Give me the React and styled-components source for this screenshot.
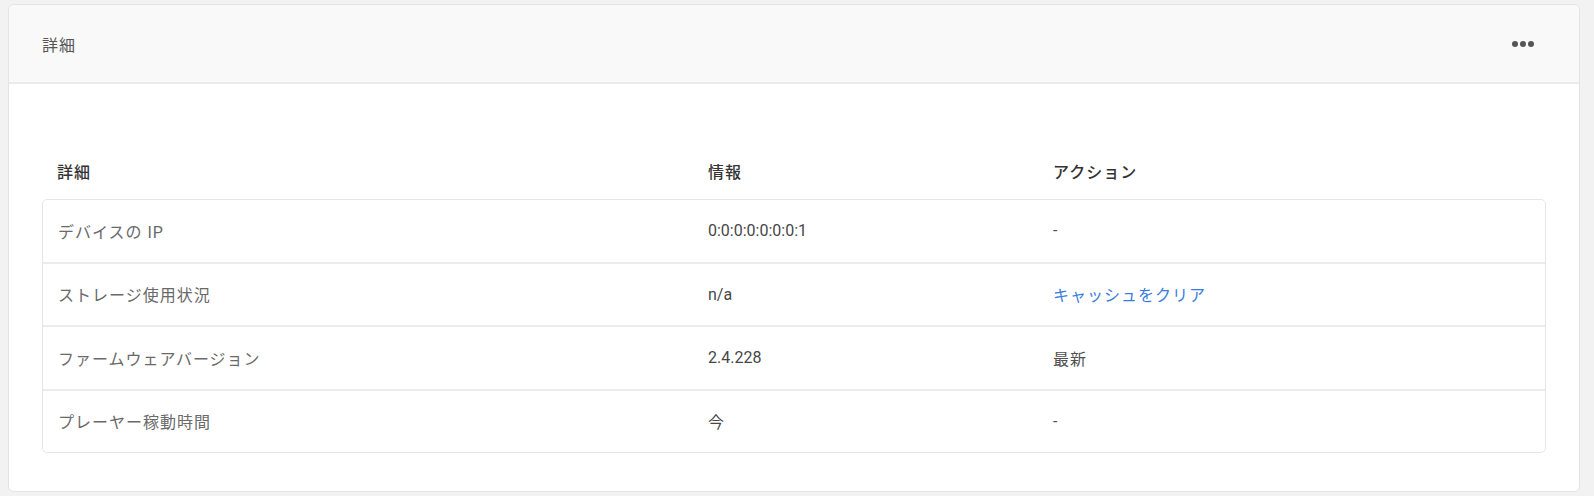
import React from "react";
import styled, { createGlobalStyle } from "styled-components";

const rows = [
  { label: "デバイスの IP", info: "0:0:0:0:0:0:0:1", action: "-" },
  { label: "ストレージ使用状況", info: "n/a", action: "キャッシュをクリア", link: true },
  { label: "ファームウェアバージョン", info: "2.4.228", action: "最新" },
  { label: "プレーヤー稼動時間", info: "今", action: "-" },
];

const App = () => {
  return (
    <>
      <GlobalStyle />
      <Page>
        <Card>
          <Header>
            <Title>詳細</Title>
            <MoreButton aria-label="more">
              <Dot />
              <Dot />
              <Dot />
            </MoreButton>
          </Header>
          <Body>
            <HeadRow>
              <HeadCell>詳細</HeadCell>
              <HeadCell>情報</HeadCell>
              <HeadCell>アクション</HeadCell>
            </HeadRow>
            <TableBox>
              {rows.map((row) => (
                <Row key={row.label}>
                  <Cell tone="muted">{row.label}</Cell>
                  <Cell latin>{row.info}</Cell>
                  {row.link ? (
                    <Cell as="a" href="#" tone="link">
                      {row.action}
                    </Cell>
                  ) : (
                    <Cell tone="dark">{row.action}</Cell>
                  )}
                </Row>
              ))}
            </TableBox>
          </Body>
        </Card>
      </Page>
    </>
  );
};

const GlobalStyle = createGlobalStyle`
  body {
    margin: 0;
    background: #f2f2f2;
    font-family: Roboto, "Noto Sans CJK JP", sans-serif;
  }
`;

const Page = styled.div`
  padding: 4px 14px 5px 8px;
`;

const Card = styled.div`
  background: #fff;
  border: 1px solid #e4e4e4;
  border-radius: 6px;
  overflow: hidden;
`;

const Header = styled.div`
  height: 77px;
  display: flex;
  align-items: center;
  justify-content: space-between;
  padding: 0 45px 0 33px;
  background: #f9f9f9;
  border-bottom: 2px solid #ebebeb;
`;

const Title = styled.div`
  font-size: 16px;
  letter-spacing: 1px;
  color: #555;
  padding-top: 1px;
`;

const MoreButton = styled.div`
  display: flex;
  gap: 2px;
  cursor: pointer;
`;

const Dot = styled.span`
  width: 6px;
  height: 6px;
  border-radius: 50%;
  background: #555;
`;

const Body = styled.div`
  padding: 75px 33px 38px;
`;

const HeadRow = styled.div`
  display: grid;
  grid-template-columns: 651px 345px 1fr;
  height: 40px;
  align-items: start;
`;

const HeadCell = styled.div`
  padding-left: 15px;
  font-size: 16px;
  font-weight: 500;
  letter-spacing: 1px;
  color: #333;
`;

const TableBox = styled.div`
  border: 1px solid #e6e6e6;
  border-radius: 5px;
`;

const Row = styled.div`
  display: grid;
  grid-template-columns: 650px 345px 1fr;
  align-items: center;
  height: 61.5px;
  & + & {
    border-top: 2px solid #ececec;
  }
`;

const toneColors = {
  muted: "#6a6a6a",
  dark: "#505050",
  link: "#3b7ddd",
};

const Cell = styled.div`
  padding-left: 15px;
  font-size: 16px;
  letter-spacing: ${({ latin }) => (latin ? "0" : "1px")};
  color: ${({ tone }) => toneColors[tone] || "#474747"};
  text-decoration: none;
`;

export default App;
